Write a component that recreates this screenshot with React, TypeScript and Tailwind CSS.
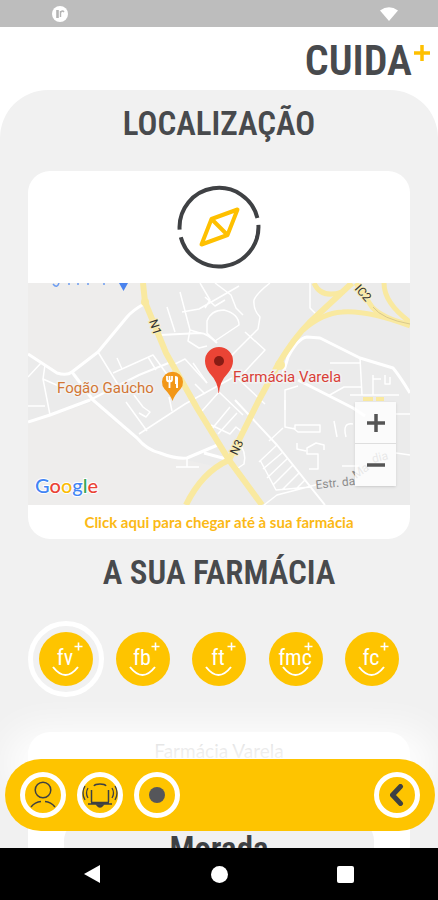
import { useState } from "react";
import { clsx } from "clsx";

const pharmacies = [
  { id: "fv", name: "Farmácia Varela" },
  { id: "fb", name: "Farmácia B" },
  { id: "ft", name: "Farmácia T" },
  { id: "fmc", name: "Farmácia MC" },
  { id: "fc", name: "Farmácia C" },
];

const displayFont = "font-['Roboto_Condensed',Roboto,sans-serif] font-semibold";

function StatusBar() {
  return (
    <div className="flex h-[27px] shrink-0 items-center justify-between bg-[#bdbdbd] pl-[52px] pr-[40px]">
      <svg width="16" height="16" viewBox="0 0 16 16" aria-hidden="true">
        <circle cx="8" cy="8" r="8" fill="#fff" />
        <path d="M5.500 4V12" stroke="#b5b5b5" strokeWidth="2.600" fill="none" />
        <path d="M8.500 11V5M9 6Q10.500 4 12 6" stroke="#b5b5b5" strokeWidth="1.400" fill="none" />
      </svg>
      <svg width="18" height="14" viewBox="0 0 18 14" aria-hidden="true">
        <path d="M0 3.500Q9-3 18 3.500L9 14Z" fill="#fff" />
      </svg>
    </div>
  );
}

function CompassIcon() {
  return (
    <svg width="84" height="84" viewBox="0 0 84 84" fill="none" strokeLinecap="round" strokeLinejoin="round" aria-hidden="true">
      <g stroke="#3f4144" strokeWidth="4" strokeLinecap="butt">
        <path d="M2.600 44.700A39.500 39.500 0 0 1 80.400 33" />
        <path d="M81.400 39.900A39.500 39.500 0 0 1 3.800 52.200" />
      </g>
      <path d="M60.500 24.500L34.500 34L24.500 59.500L50.500 50ZM34.500 34L50.500 50" stroke="#fec000" strokeWidth="4" />
    </svg>
  );
}

function LocationMap() {
  return (
    <svg
      viewBox="0 0 382 222"
      className="block w-full font-[Roboto,sans-serif]"
      role="img"
      aria-label="Mapa"
    >
      <rect width="382" height="222" fill="#ebebeb" />
      <path d="M0 0H115L113 22L98 34L69 69L43 89L28 90L0 72ZM0 141L64 119L108 157L131 172L158 177L190 184L158 222H0Z" fill="#eeedec" />
      <g fill="none" stroke="#fff" strokeWidth="1.500" strokeLinejoin="round" transform="translate(1 0)">
        <g strokeWidth="3">
          <path d="M-1 71L28 90Q38 93 43 89L69 69L98 34Q104 27 115 21" />
          <path d="M43 89L64 117L108 155Q118 167 131 170Q146 176 158 175L191 161M175 170L201 177" />
          <path d="M-1 139L21 132L61 117" />
          <path d="M253 94L259 74Q269 55 278 54L291 55L331 75L364 85Q370 92 381 110" />
          <path d="M269 97L324 125L336 133" />
        </g>
        <path d="M206 117L248 162L296 222M131 52L171 50Q178 50 188 60M61 117L110 92L142 79" strokeWidth="2" />
        <path d="M69 69L88 100L94 109M84 90L124 72L145 101M88 75L93 86M16 82L14 96L21 132M12 80L-1 94M14 96L50 112M-1 123H16" />
        <path d="M110 151L156 121L203 95M97 119L118 148M105 112L114 124L121 129L117 134L110 130M140 114L143 128M142 83L156 76L178 100M119 74L127 87" />
        <path d="M138 24L146 49M151 9L161 47L159 58L170 65L178 63M153 29L170 26L198 10L210 3M176 14L186 23L196 17M186 0L202 12L207 25L214 32M171 0L181 17L176 25M161 47L171 50" />
        <path d="M241 0Q228 10 225 17Q224 27 231 34L229 46L200 75M216 49L236 67L211 94L197 82M178 38Q182 27 195 27Q210 31 210 42L186 58L178 50Z" />
        <path d="M190 109L214 132M190 109L173 128M203 90L236 121M176 111L166 101M201 124L182 147M208 130L189 151M182 142L201 151L207 144L216 151M164 80L178 100" />
        <path d="M281 0V25L287 31M331 75L333 112M301 80H331M321 112H370M344 92V112M356 92V101H361V94M344 96H352M256 127V107L269 103" />
        <path d="M256 117V144L266 146V142H291V149H269L264 145M299 113L315 104H333M254 145L240 158" />
        <path d="M231 177L247 207L282 204M248 162L230 179M254 169L234 186M259 175L238 195M264 182L244 202M270 190L253 207M276 197L267 206M235 222L248 212L290 201" />
        <path d="M280 186H289V171H278V165L287 160L295 162V167M268 160V166L277 168M305 138L308 154M317 154Q313 139 324 141M313 183H330M367 131H381M367 170L381 172" />
        <path d="M147 184H170M158 175V184M209 160Q218 168 215 181L209 185L201 177" />
      </g>
      <g fill="none" stroke="#f9e9a0" strokeWidth="6">
        <path d="M115 0L117 19L138 70L169 125L201 177L234 222" />
        <path d="M158 222Q174 189 201 177L231 117L251 80Q266 55 281 40L324 0" />
        <path d="M275 47Q295 30 314 29Q340 27 382 43M328 0L344 24Q354 35 382 42M356 0Q356 20 382 39M286 0Q293 16 314 9" strokeWidth="5" />
        <path d="M335 116H345M348 116H356" strokeWidth="4" />
      </g>
      <path d="M345 24Q354 36 382 41" stroke="#d9c98c" strokeWidth="1" fill="none" />
      <circle cx="117" cy="19" r="4" fill="#f9e9a0" />
      <circle cx="252" cy="82" r="5" fill="#f9e9a0" />
      <g fill="#333" fontSize="12" stroke="#f9edb5" strokeWidth="2" paintOrder="stroke">
        <text x="121" y="38" transform="rotate(72 121 38)">N1</text>
        <text x="209" y="173" transform="rotate(-64 209 173)">N3</text>
        <text x="326" y="6" transform="rotate(48 326 6)">IC2</text>
      </g>
      <path d="M91 0H100L95.500 8Z" fill="#4a83ee" />
      <path d="M25 1Q29 6 31 0M40 1h2M49 1h2M59 1h2M75 1h2" stroke="#6c9cf0" strokeWidth="1.500" fill="none" />
      <g stroke="#f2f2f2" strokeWidth="3" paintOrder="stroke">
        <text x="29" y="110" fontSize="15" fill="#d27735">Fogão Gaúcho</text>
        <text x="205" y="99" fontSize="15" fill="#d93f38">Farmácia Varela</text>
      </g>
      <text x="288" y="206" fontSize="12" fill="#8c8c8c" transform="rotate(-6 288 206)">Estr. da</text>
      <text x="328" y="196" fontSize="12" fill="#8c8c8c" transform="rotate(-35 328 196)">Ma</text>
      <text x="345" y="180" fontSize="12" fill="#8c8c8c" transform="rotate(-14 345 180)">dia</text>
      <path d="M144.500 118Q142.500 112 136.500 106A10.500 10.500 0 1 1 152.500 106Q146.500 112 144.500 118Z" fill="#f29718" />
      <path d="M139 93v3.500q0 2 2.500 2t2.500-2V93M141.500 93v12" stroke="#fff" strokeWidth="1.800" fill="none" />
      <path d="M147 93q3 0 3 2v10h-2v-4h-1z" fill="#fff" />
      <path d="M190.500 110Q190 99 181.500 90Q177 84 177 78A14 14 0 0 1 205 78Q205 84 200 90Q191.500 99 191 110Z" fill="#ea4435" />
      <circle cx="191" cy="78" r="5" fill="#871c14" />
      <text x="7" y="210" fontSize="20" stroke="#fff" strokeWidth="2" paintOrder="stroke" className="font-[Lato,sans-serif] font-medium">
        <tspan fill="#4285f4">G</tspan>
        <tspan fill="#ea4335">o</tspan>
        <tspan fill="#fbbc05">o</tspan>
        <tspan fill="#4285f4">g</tspan>
        <tspan fill="#34a853">l</tspan>
        <tspan fill="#ea4335">e</tspan>
      </text>
    </svg>
  );
}

function ZoomControls() {
  return (
    <div className="absolute right-[14px] bottom-[19px] w-[41px] bg-white/80 shadow-sm">
      <button type="button" aria-label="Aumentar" className="flex h-[42px] w-full items-center justify-center border-b border-[#dedede]">
        <svg width="18" height="18" viewBox="0 0 18 18" stroke="#555" strokeWidth="3.500" aria-hidden="true">
          <path d="M0 9H18M9 0V18" />
        </svg>
      </button>
      <button type="button" aria-label="Diminuir" className="flex h-[42px] w-full items-center justify-center">
        <svg width="18" height="18" viewBox="0 0 18 18" stroke="#555" strokeWidth="3.500" aria-hidden="true">
          <path d="M0 9H18" />
        </svg>
      </button>
    </div>
  );
}

interface PharmacyBadgeProps {
  id: string;
  name: string;
  selected: boolean;
  onSelect: () => void;
}

function PharmacyBadge({ id, name, selected, onSelect }: PharmacyBadgeProps) {
  return (
    <button
      type="button"
      aria-label={name}
      aria-pressed={selected}
      onClick={onSelect}
      className={clsx(
        "flex size-[76px] items-center justify-center rounded-full border-[5px]",
        selected ? "border-white" : "border-transparent"
      )}
    >
      <svg width="54" height="54" viewBox="0 0 54 54" className="shrink-0" aria-hidden="true">
        <circle cx="27" cy="27" r="27" fill="#fec400" />
        <text x="26" y="33" textAnchor="middle" fontSize="22" fill="#fff" className="font-['Roboto_Condensed',Roboto,sans-serif]">
          {id}
        </text>
        <path d="M14 35Q26.500 51 39 35" stroke="#fff" strokeWidth="2" fill="none" />
        <path d="M39.500 10.500V18.500M35.500 14.500H43.500" stroke="#fff" strokeWidth="1.600" fill="none" />
      </svg>
    </button>
  );
}

const roundButton =
  "flex size-[46px] items-center justify-center rounded-full border-[5px] border-white text-[#3d4043]";

function BottomBar() {
  return (
    <div className="absolute inset-x-0 bottom-[17px] mr-[3px] ml-[5px] flex h-[72px] items-center gap-[11px] rounded-full bg-[#fec400] px-[15px] shadow-[0_-32px_36px_0_rgba(255,255,255,0.9)]">
      <button type="button" aria-label="Perfil" className={roundButton}>
        <svg width="28" height="28" viewBox="0 0 28 28" fill="none" stroke="currentColor" strokeWidth="1.500" className="shrink-0" aria-hidden="true">
          <circle cx="14" cy="9" r="7.800" />
          <path d="M2 26Q6 21 12 20.500M16 20.500Q22 21 26 26" />
        </svg>
      </button>
      <button type="button" aria-label="Notificações" className={roundButton}>
        <svg width="36" height="30" viewBox="0 0 36 30" fill="none" stroke="currentColor" strokeWidth="1.500" className="shrink-0" aria-hidden="true">
          <path d="M12 6Q13 4 18 4T24 6M9.500 22V10M26.500 22V10" />
          <path d="M6 24H30M9 22.500H27" />
          <path d="M15 25H21Q18 29 15 25Z" fill="currentColor" />
          <path d="M6 8Q3 13 6 18M3 6Q-1 13 3 20M30 8Q33 13 30 18M33 6Q37 13 33 20" strokeWidth="1.300" />
        </svg>
      </button>
      <button type="button" aria-label="Localização" className={roundButton}>
        <span className="size-4 rounded-full bg-[#55565a]" />
      </button>
      <button type="button" aria-label="Voltar" className={clsx(roundButton, "ml-auto")}>
        <svg width="14" height="22" viewBox="0 0 14 22" fill="none" stroke="currentColor" strokeWidth="5" strokeLinecap="round" strokeLinejoin="round" aria-hidden="true">
          <path d="M10.500 2.500L2.500 11L10.500 19.500" />
        </svg>
      </button>
    </div>
  );
}

function NavigationBar() {
  return (
    <nav className="flex h-[52px] shrink-0 items-center justify-center gap-[109px] bg-black">
      <button type="button" aria-label="Anterior">
        <svg width="18" height="18" viewBox="0 0 18 18" fill="#fff" aria-hidden="true">
          <path d="M0 9L16 0V18Z" />
        </svg>
      </button>
      <button type="button" aria-label="Início" className="size-[17px] rounded-full bg-white" />
      <button type="button" aria-label="Recentes" className="size-[17px] rounded-xs bg-white" />
    </nav>
  );
}

export default function App() {
  const [selected, setSelected] = useState("fv");

  return (
    <div className="flex h-screen flex-col overflow-hidden bg-white font-[Lato,sans-serif] text-[#484a4d]">
      <StatusBar />
      <header className="flex h-[63px] shrink-0 items-center justify-end pt-1 pr-2">
        <h1 className={clsx("flex text-[42px] leading-[60px]", displayFont)}>
          CUIDA
          <svg width="16" height="16" viewBox="0 0 16 16" stroke="#fec000" strokeWidth="3.500" className="mt-[14px] ml-[2px]" aria-label="+">
            <path d="M0 8H16M8 0V16" />
          </svg>
        </h1>
      </header>
      <div className="relative min-h-0 flex-1">
        <main className="h-full overflow-hidden rounded-t-[48px] bg-[#f1f1f1] px-7">
          <h2 className={clsx("pt-4 text-center text-[33px] leading-9", displayFont)}>LOCALIZAÇÃO</h2>
          <section className="mt-[29px] overflow-hidden rounded-[22px] bg-white">
            <div className="flex h-[112px] items-center justify-center">
              <CompassIcon />
            </div>
            <div className="relative">
              <LocationMap />
              <ZoomControls />
            </div>
            <a href="#farmacia" className="block text-center text-[15px] leading-[34px] font-bold text-[#fbb916]">
              Click aqui para chegar até à sua farmácia
            </a>
          </section>
          <h2 className={clsx("mt-4 text-center text-[33px] leading-9", displayFont)}>A SUA FARMÁCIA</h2>
          <div className="mt-[30px] flex justify-between">
            {pharmacies.map((p) => (
              <PharmacyBadge key={p.id} {...p} selected={selected === p.id} onSelect={() => setSelected(p.id)} />
            ))}
          </div>
          <section id="farmacia" className="mt-[35px] rounded-[22px] bg-white px-9 pt-[7px] text-center">
            <h3 className="text-[19px] leading-6 text-[#999]">Farmácia Varela</h3>
            <div className="mt-14 rounded-t-[22px] bg-[#f1f1f1] pt-3">
              <h4 className={clsx("text-[33px] leading-9 text-[#3d4043]", displayFont)}>Morada</h4>
            </div>
          </section>
        </main>
        <BottomBar />
      </div>
      <NavigationBar />
    </div>
  );
}
